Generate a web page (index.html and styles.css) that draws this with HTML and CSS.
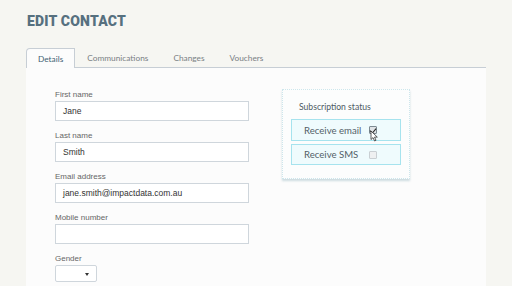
FILE: index.html
```html
<!DOCTYPE html>
<html lang="en">
<head>
  <meta charset="UTF-8">
  <title>Edit Contact</title>
  <link rel="stylesheet" href="styles.css">
</head>
<body>
  <!-- Header -->
  <h1 class="title">EDIT CONTACT</h1>

  <!-- Tabs -->
  <div class="tabs">
    <span class="tab active">Details</span>
    <span class="tab">Communications</span>
    <span class="tab">Changes</span>
    <span class="tab">Vouchers</span>
  </div>

  <!-- Details panel -->
  <div class="panel">
    <div class="form">
      <label class="field">
        <span class="label">First name</span>
        <span class="input">Jane</span>
      </label>
      <label class="field">
        <span class="label">Last name</span>
        <span class="input">Smith</span>
      </label>
      <label class="field">
        <span class="label">Email address</span>
        <span class="input">jane.smith@impactdata.com.au</span>
      </label>
      <label class="field">
        <span class="label">Mobile number</span>
        <span class="input"></span>
      </label>
      <label class="field">
        <span class="label">Gender</span>
        <span class="select"><span class="caret"></span></span>
      </label>
    </div>

    <div class="subs">
      <h3>Subscription status</h3>
      <div class="sub-row">
        <span>Receive email</span>
        <span class="check checked">
          <svg class="cursor" width="9" height="12" viewBox="0 0 9 12">
            <path d="M1 1 L1 9.5 L3 7.6 L4.6 11 L6 10.3 L4.5 7.1 L7.3 7.1 Z" fill="#fff" stroke="#333" stroke-width="0.8"/>
          </svg>
        </span>
      </div>
      <div class="sub-row">
        <span>Receive SMS</span>
        <span class="check"></span>
      </div>
    </div>
  </div>
</body>
</html>
```

FILE: styles.css
```css
/* Page */
body {
  margin: 0;
  background: #f6f6f2;
  font-family: "Liberation Sans", Arial, sans-serif;
  width: 512px;
  height: 286px;
  overflow: hidden;
}

.title {
  margin: 0;
  padding: 13px 0 0 27px;
  height: 36px;
  box-sizing: border-box;
  font-family: "Roboto", sans-serif;
  font-weight: 900;
  font-size: 14px;
  letter-spacing: 0.2px;
  color: #56707f;
}

/* Tabs */
.tabs {
  display: flex;
  align-items: flex-end;
  margin: 12px 26px 0 26px;
  height: 19px;
  border-bottom: 1px solid #c7ced5;
  font-family: "Lato", sans-serif;
  font-size: 8.3px;
  color: #7a7f84;
}

.tab {
  padding: 0 12px 4px 12px;
  margin-left: 1px;
}

.active {
  height: 20px;
  box-sizing: border-box;
  padding: 5px 11px 0 11px;
  margin-left: 0;
  margin-right: -1px;
  margin-bottom: -1px;
  border: 1px solid #c7ced5;
  border-bottom: none;
  border-radius: 4px 0 0 0;
  background: #fcfcfc;
  color: #3f5f73;
}

/* Panel */
.panel {
  display: flex;
  margin: 0 26px;
  height: 220px;
  background: #fcfcfc;
}

.form {
  display: flex;
  flex-direction: column;
  padding: 22px 0 0 29px;
  width: 194px;
}

.field {
  display: flex;
  flex-direction: column;
  margin-bottom: 10px;
}

.label {
  font-size: 8px;
  color: #666;
  height: 11px;
  line-height: 10px;
}

.input {
  height: 20px;
  box-sizing: border-box;
  border: 1px solid #cfd6dc;
  background: #fff;
  padding: 0 7px;
  line-height: 18px;
  font-size: 8.5px;
  color: #333;
}

.select {
  position: relative;
  width: 42px;
  height: 17px;
  box-sizing: border-box;
  border: 1px solid #cfd6dc;
  border-radius: 2px;
  background: #fff;
}

.caret {
  position: absolute;
  right: 7px;
  top: 7px;
  border-left: 2px solid transparent;
  border-right: 2px solid transparent;
  border-top: 3px solid #333;
}

/* Subscription box */
.subs {
  align-self: flex-start;
  margin: 21px 0 0 33px;
  width: 128px;
  height: 90px;
  box-sizing: border-box;
  border: 1px dotted #cde6ec;
  padding: 0 8px;
  background: #fcfdfd;
  box-shadow: 0 2px 2px rgba(120, 160, 175, 0.35);
  font-family: "Lato", sans-serif;
}

.subs h3 {
  margin: 0;
  padding: 12px 0 0 8px;
  height: 29px;
  box-sizing: border-box;
  font-size: 8.6px;
  font-weight: 400;
  color: #4d5a63;
}

.sub-row {
  display: flex;
  align-items: center;
  height: 22px;
  box-sizing: border-box;
  margin-bottom: 3px;
  padding: 0 0 0 12px;
  border: 1px solid #a6e3ee;
  background: #effbfd;
  font-size: 9.6px;
  color: #535f68;
}

.sub-row:last-child { height: 21px; }

.check {
  position: relative;
  margin-left: auto;
  margin-right: 23px;
  width: 6px;
  height: 6px;
  border: 1px solid #c9cfd3;
  border-radius: 1px;
  background: #eef0f1;
}

.checked {
  border-color: #7d8a92;
  background: #dfe3e6;
}

.checked::after {
  content: "";
  position: absolute;
  left: 1px;
  top: 0;
  width: 3px;
  height: 5px;
  border-right: 1.5px solid #222;
  border-bottom: 1.5px solid #222;
  transform: rotate(40deg);
}

.cursor {
  position: absolute;
  left: 0;
  top: 3px;
  z-index: 2;
}
```
